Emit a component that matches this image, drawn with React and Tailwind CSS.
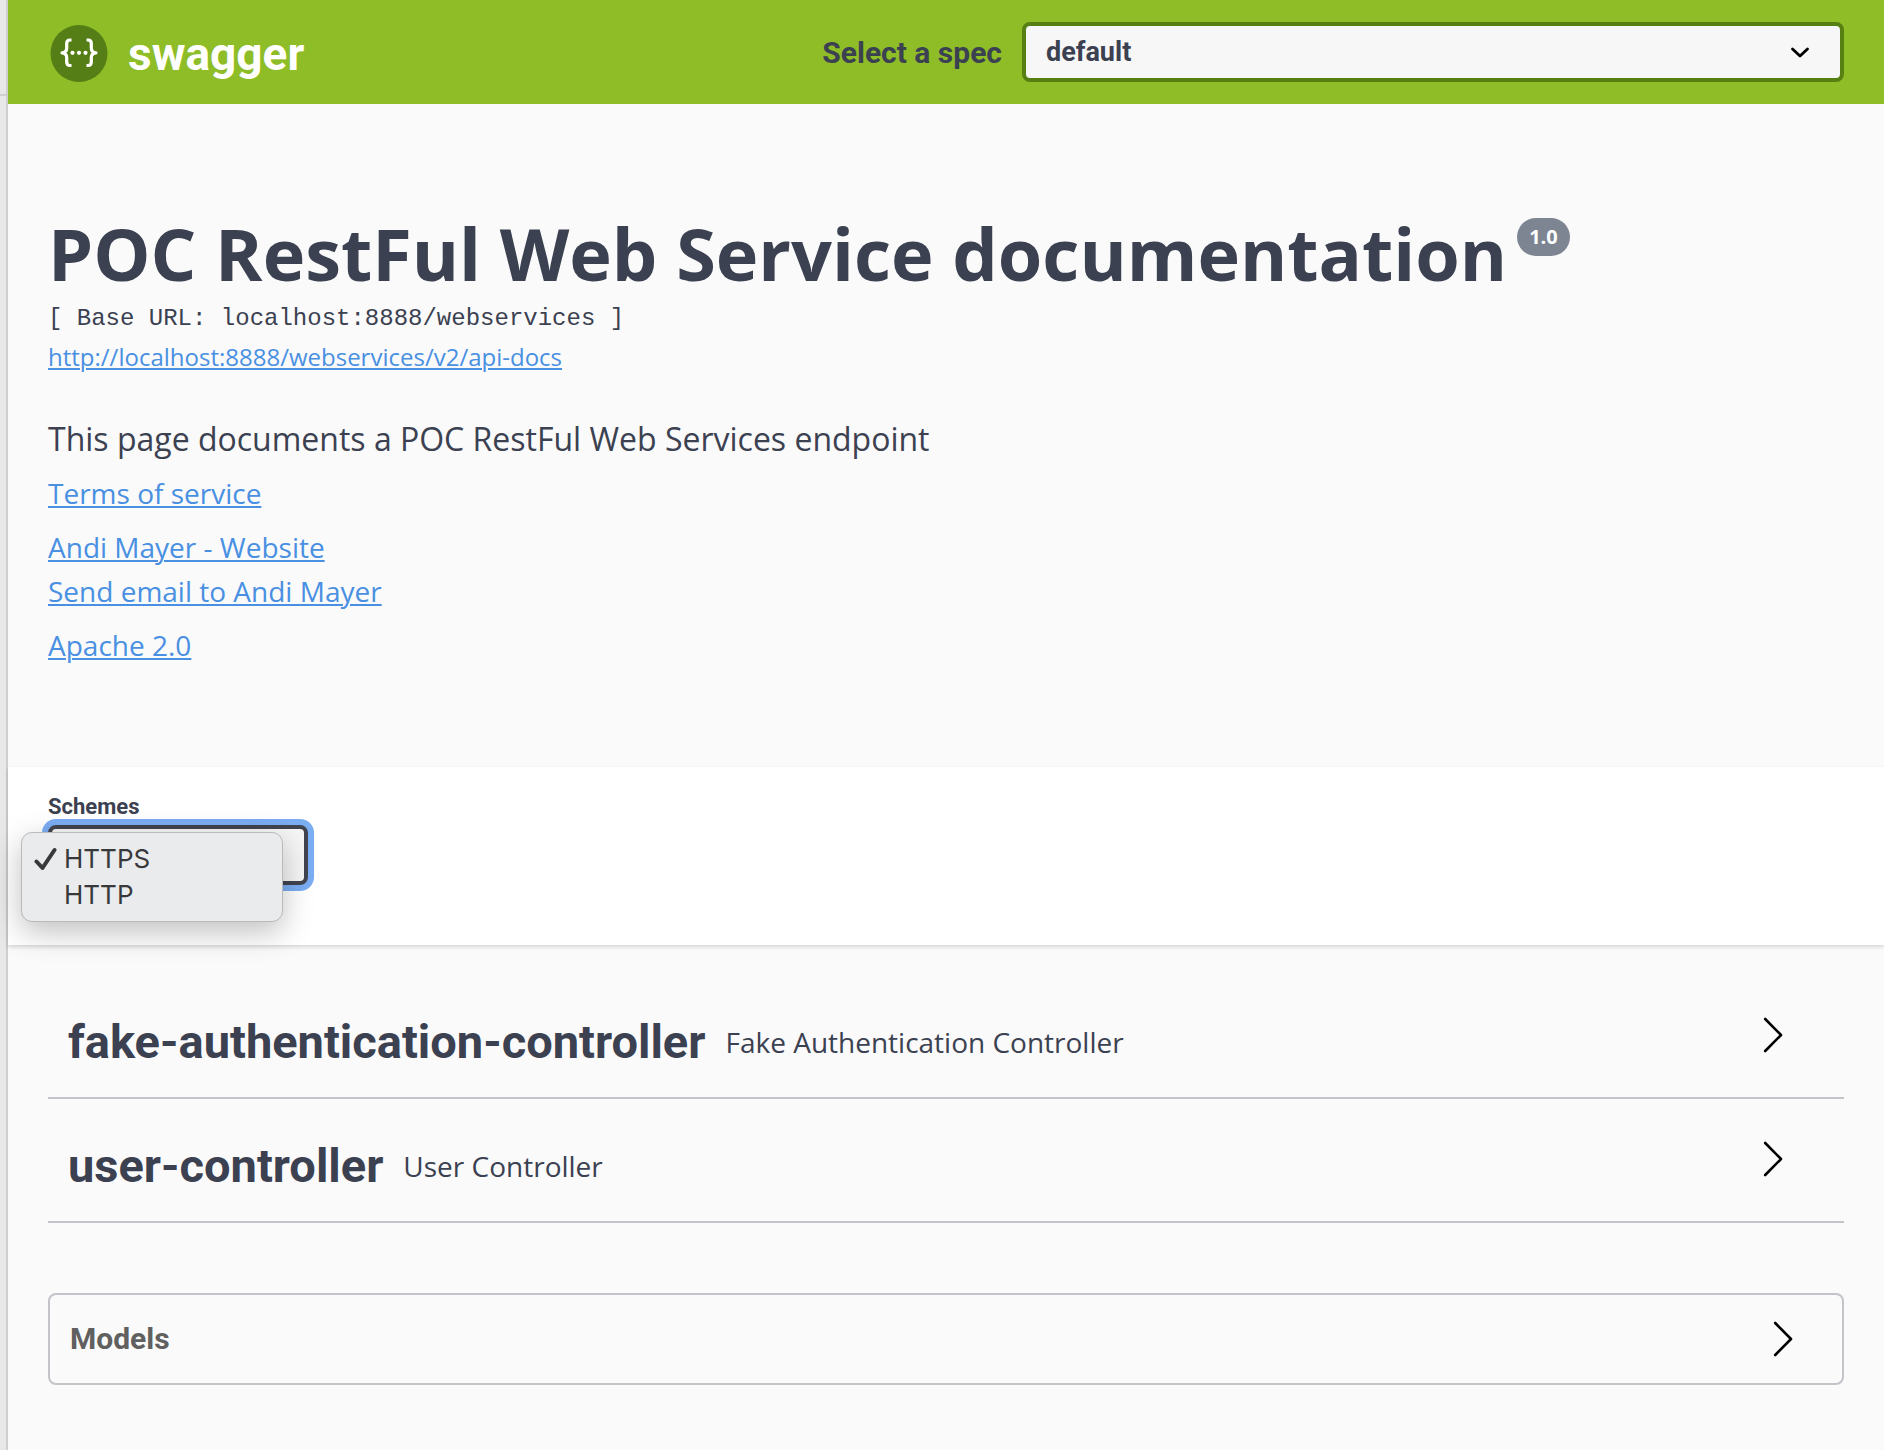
import { useState } from "react";

const link = "text-[#4990e2] underline decoration-2 underline-offset-2";
const heading = "font-['Roboto',sans-serif] font-bold";

function Arrow() {
  return (
    <svg className="h-10 w-10 shrink-0" viewBox="0 0 40 40" fill="none" stroke="#000" strokeWidth="2.6" strokeLinecap="round" strokeLinejoin="round" aria-hidden="true">
      <path d="M12.2 4 L28 20 L12.2 36" />
    </svg>
  );
}

function Logo() {
  return (
    <svg className="h-[58px] w-[58px]" viewBox="0 0 58 58" fill="none" aria-hidden="true">
      <circle cx="29" cy="29.5" r="28.5" fill="#557f16" />
      <g stroke="#fff" strokeWidth="3.2" strokeLinejoin="round">
        <path d="M21.5 16 H20 Q16.7 16 16.7 19.5 V24 Q16.7 28.5 12 28.8 Q16.7 29.1 16.7 33.5 V38 Q16.7 41.5 20 41.5 H21.5" />
        <path d="M36.5 16 H38 Q41.3 16 41.3 19.5 V24 Q41.3 28.5 46 28.8 Q41.3 29.1 41.3 33.5 V38 Q41.3 41.5 38 41.5 H36.5" />
      </g>
      <g fill="#fff">
        <circle cx="22.5" cy="28.8" r="2.1" />
        <circle cx="29" cy="28.8" r="2.1" />
        <circle cx="35.5" cy="28.8" r="2.1" />
      </g>
    </svg>
  );
}

function Topbar() {
  return (
    <header className="flex h-[104px] items-center justify-between bg-[#8ebd27] px-10">
      <a href="#home" className="flex items-center gap-5 pl-0.5 pt-0.5 text-white">
        <Logo />
        <span className={`${heading} pt-0.5 text-[46px] leading-[56px]`}>swagger</span>
      </a>
      <div className="flex w-[57%] items-center gap-5">
        <label htmlFor="spec" className={`${heading} shrink-0 pl-0.5 pt-0.5 text-[30px] leading-9 text-[#3b4151]`}>
          Select a spec
        </label>
        <div className="relative min-w-0 flex-1">
          <select id="spec" className={`${heading} h-[60px] w-full appearance-none rounded-lg border-4 border-[#578013] bg-[#f7f7f7] pl-5 pr-20 text-[27px] text-[#3b4151]`}>
            <option>default</option>
          </select>
          <svg className="pointer-events-none absolute right-8 top-5 h-5 w-6" viewBox="0 0 24 20" fill="none" stroke="#000" strokeWidth="2.8" strokeLinecap="round" strokeLinejoin="round" aria-hidden="true">
            <path d="M4.5 7 L12 14 L19.5 7" />
          </svg>
        </div>
      </div>
    </header>
  );
}

function Info() {
  return (
    <section className="px-10 pb-[100px] pt-[99px] text-[28px] leading-[44px]">
      <h1 className="flex items-start gap-2.5 text-[72px] font-bold leading-[100px]">
        POC RestFul Web Service documentation
        <span className="mt-[15px] rounded-full bg-[#7d8492] px-3 text-[20px] leading-[38px] text-white">1.0</span>
      </h1>
      <pre className="font-['Liberation_Mono',monospace] text-[24px] leading-8">[ Base URL: localhost:8888/webservices ]</pre>
      <p className="pt-0.5 text-[24px] leading-[40px]">
        <a href="#api-docs" className={link}>http://localhost:8888/webservices/v2/api-docs</a>
      </p>
      <p className="pb-2.5 pt-10 text-[32px]">This page documents a POC RestFul Web Services endpoint</p>
      <div className="flex flex-col items-start gap-2.5">
        <a href="#terms" className={link}>Terms of service</a>
        <div className="flex flex-col items-start">
          <a href="#website" className={link}>Andi Mayer - Website</a>
          <a href="#email" className={link}>Send email to Andi Mayer</a>
        </div>
        <a href="#license" className={link}>Apache 2.0</a>
      </div>
    </section>
  );
}

function Schemes() {
  const [scheme, setScheme] = useState("HTTPS");
  return (
    <section className="bg-white px-10 pb-[60px] pt-6 shadow-[0_2px_4px_rgba(0,0,0,0.15)]">
      <label htmlFor="scheme" className={`${heading} mb-0.5 block text-[22px] leading-8`}>Schemes</label>
      <div className="relative w-[260px]">
        <select
          id="scheme"
          value={scheme}
          onChange={(e) => setScheme(e.target.value)}
          className="block h-[60px] w-full appearance-none rounded-lg border-4 border-[#41444e] bg-[#f5f5f5] pl-5 text-[26px] ring-6 ring-[#7badf3]"
        >
          <option>HTTPS</option>
          <option>HTTP</option>
        </select>
        <div role="listbox" aria-label="Schemes" className="absolute -left-[27px] top-[7px] w-[262px] rounded-[11px] border border-[#b9babc] bg-[#eaebed] py-2 font-['Inter',sans-serif] text-[26px] leading-9 text-[#38393b] shadow-[0_10px_30px_rgba(0,0,0,0.25)]">
          {["HTTPS", "HTTP"].map((name) => (
            <button key={name} type="button" role="option" aria-selected={name === scheme} onClick={() => setScheme(name)} className="flex w-full items-center pl-3">
              <span className="w-[30px]">
                {name === scheme && (
                  <svg className="h-6 w-6" viewBox="0 0 24 24" fill="none" stroke="#38393b" strokeWidth="4" strokeLinecap="round" strokeLinejoin="round" aria-hidden="true">
                    <path d="M2.5 14.5 L8.5 21 L20.5 3" />
                  </svg>
                )}
              </span>
              {name}
            </button>
          ))}
        </div>
      </div>
    </section>
  );
}

function Tag({ name, description }) {
  return (
    <button type="button" className="mt-3 flex w-full items-center border-b-2 border-[#c3c3c9] py-6 pl-5 pr-[51px] text-left">
      <h2 className={`${heading} text-[47px] leading-[62px]`}>{name}</h2>
      <span className="flex-1 pl-5 text-[28px] leading-[38px]">{description}</span>
      <span className="-mt-3.5"><Arrow /></span>
    </button>
  );
}

export default function App() {
  return (
    <div className="flex min-h-screen bg-[#fafafa] font-['Open_Sans',sans-serif] text-[#3b4151]">
      <div className="w-2 shrink-0 border-r-2 border-[#cfcfcf] bg-[#e8e8e8]">
        <div className="h-24 border-b-2 border-[#cfcfcf]" />
      </div>
      <main className="min-w-0 flex-1">
        <Topbar />
        <Info />
        <Schemes />
        <div className="px-10 pt-[30px]">
          <Tag name="fake-authentication-controller" description="Fake Authentication Controller" />
          <Tag name="user-controller" description="User Controller" />
          <button type="button" className="mt-[70px] flex h-[92px] w-full items-center justify-between rounded-lg border-2 border-[#c3c3c9] pl-5 pr-[39px] text-[#606060]">
            <span className={`${heading} text-[30px] leading-10`}>Models</span>
            <Arrow />
          </button>
        </div>
      </main>
    </div>
  );
}
